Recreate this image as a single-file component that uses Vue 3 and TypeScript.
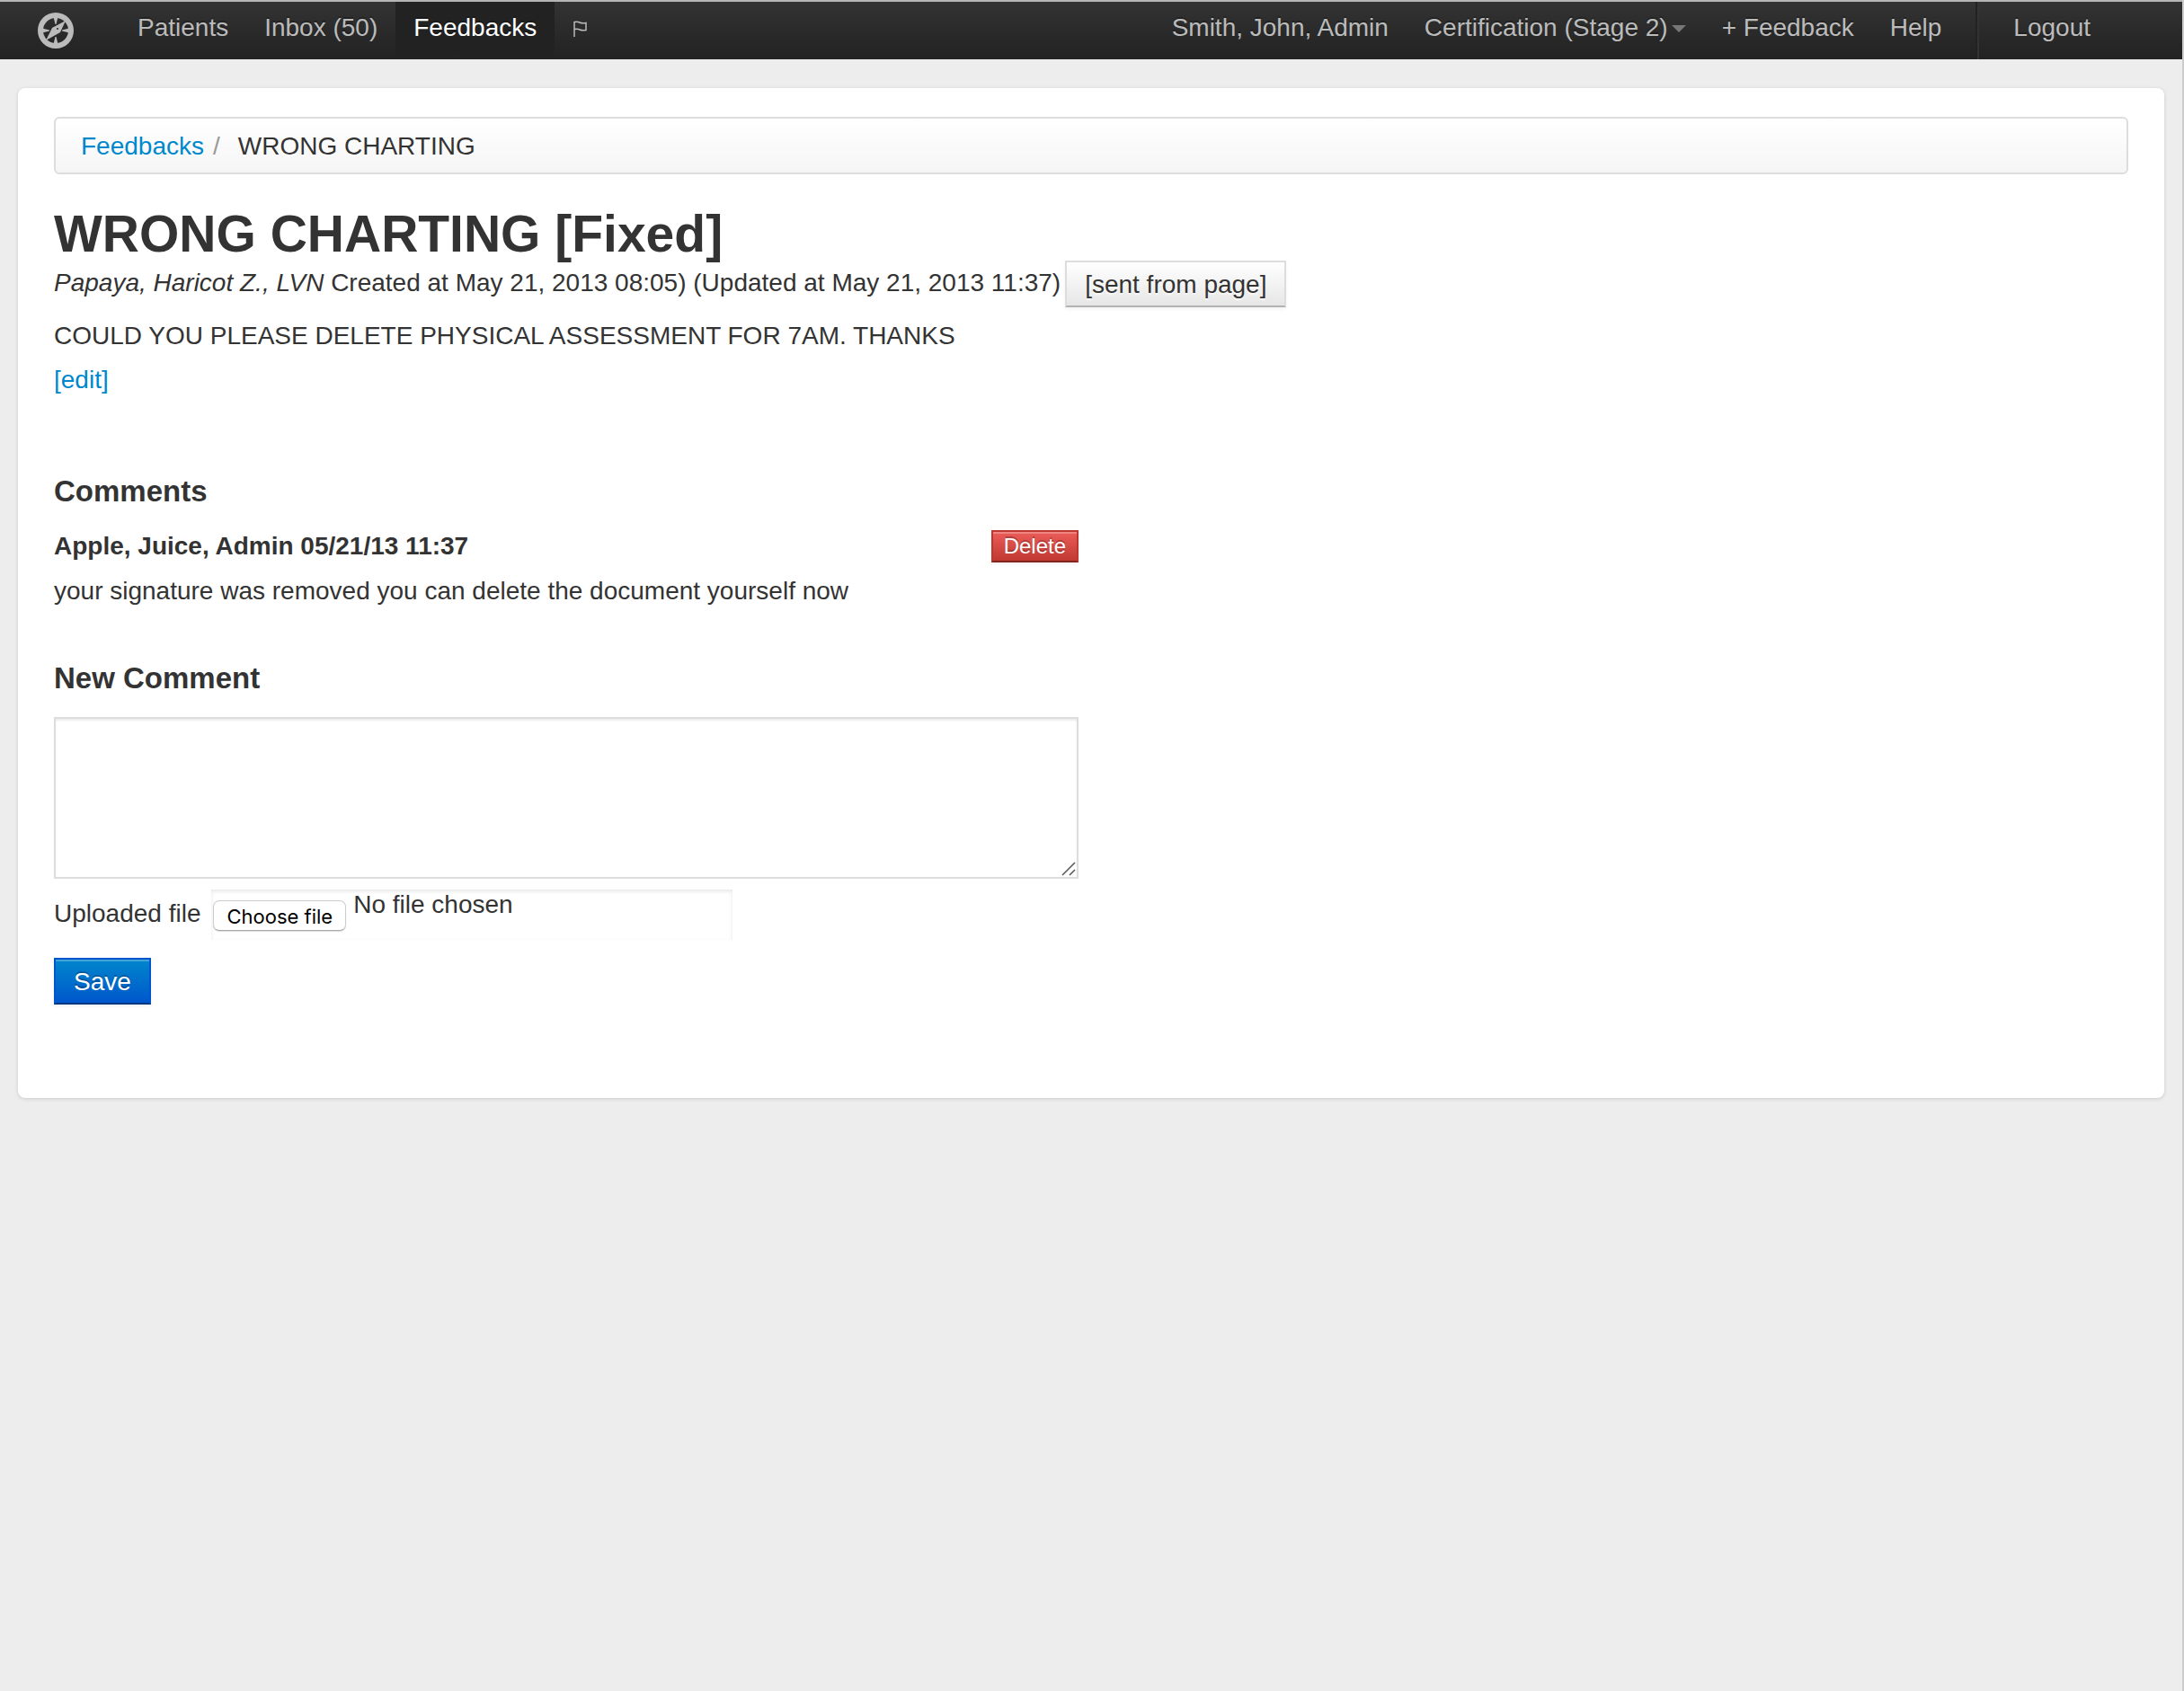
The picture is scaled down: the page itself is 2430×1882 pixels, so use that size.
<script setup lang="ts">
import { ref } from 'vue'

interface NavItem {
  label: string
  active?: boolean
  caret?: boolean
}

const mainNav: NavItem[] = [
  { label: 'Patients' },
  { label: 'Inbox (50)' },
  { label: 'Feedbacks', active: true },
]

const userNav: NavItem[] = [
  { label: 'Smith, John, Admin' },
  { label: 'Certification (Stage 2)', caret: true },
  { label: '+ Feedback' },
  { label: 'Help' },
]

const comment = ref('')
const fileName = ref('No file chosen')

function onFileChange(event: Event) {
  const input = event.target as HTMLInputElement
  fileName.value = input.files?.[0]?.name ?? 'No file chosen'
}
</script>

<template>
  <div class="page">
    <header class="navbar">
      <a href="#" class="brand" aria-label="Home">
        <svg viewBox="0 0 40 40" width="40" height="40" fill="#bbb">
          <path
            fill-rule="evenodd"
            d="M20 0a20 20 0 1 0 0 40a20 20 0 1 0 0-40zM20 6a14 14 0 1 1 0 28a14 14 0 1 1 0-28z"
          />
          <path d="M17.500 5h5L20.500 13h-1zM17.500 35h5L20.500 27h-1zM5 17.500v5L13 20.500v-1zM35 17.500v5L27 20.500v-1z" />
          <path d="M31 9L25 22L9 31L16 17z" />
          <circle cx="22" cy="18" r="1" fill="#292929" />
        </svg>
      </a>
      <nav class="nav">
        <a v-for="item in mainNav" :key="item.label" href="#" class="nav-link" :class="{ active: item.active }">{{ item.label }}</a>
        <a href="#" class="nav-link flag" aria-label="Flagged">
          <svg viewBox="0 0 16 18" width="16" height="18" fill="none" stroke="#bbb" stroke-width="1.500">
            <path d="M2 18V1M2 1.500C5 .800 6 1 8 2S12 3 15 2.500V10.500C12 11 10 11 8 10S5 9 2 9.500" />
          </svg>
        </a>
      </nav>
      <nav class="nav nav-right">
        <a v-for="item in userNav" :key="item.label" href="#" class="nav-link">{{ item.label }}<span v-if="item.caret" class="caret"></span></a>
        <span class="divider"></span>
        <a href="#" class="nav-link">Logout</a>
      </nav>
    </header>

    <main class="card">
      <nav class="breadcrumb">
        <a href="#">Feedbacks</a>
        <span class="separator">/</span>
        <span>WRONG CHARTING</span>
      </nav>

      <h1>WRONG CHARTING [Fixed]</h1>
      <div class="meta">
        <span class="meta-text"><em>Papaya, Haricot Z., LVN</em> Created at May 21, 2013 08:05) (Updated at May 21, 2013 11:37)</span>
        <button type="button" class="btn">[sent from page]</button>
      </div>
      <p class="message">COULD YOU PLEASE DELETE PHYSICAL ASSESSMENT FOR 7AM. THANKS</p>
      <a href="#" class="edit">[edit]</a>

      <section class="comments">
        <h2>Comments</h2>
        <article>
          <div class="comment-head">
            <strong>Apple, Juice, Admin 05/21/13 11:37</strong>
            <button type="button" class="btn btn-danger">Delete</button>
          </div>
          <p class="comment-body">your signature was removed you can delete the document yourself now</p>
        </article>
      </section>

      <form class="new-comment" @submit.prevent>
        <h2><label for="comment">New Comment</label></h2>
        <div class="textarea-wrap">
          <textarea id="comment" v-model="comment"></textarea>
          <svg class="grip" viewBox="0 0 16 16" width="16" height="16" stroke="#555" stroke-width="1.500">
            <path d="M1 15L15 1M9 15L15 9" />
          </svg>
        </div>
        <div class="upload">
          <label for="upload">Uploaded file</label>
          <div class="file-field">
            <span class="file-button">Choose file</span>
            <span class="file-name">{{ fileName }}</span>
            <input id="upload" type="file" @change="onFileChange" />
          </div>
        </div>
        <button type="submit" class="btn btn-primary">Save</button>
      </form>
    </main>
  </div>
</template>

<style>
body {
  margin: 0;
  background: #ededed;
}
</style>

<style scoped>
.page {
  box-sizing: border-box;
  min-height: 100vh;
  border-right: 2px solid #ccc;
  background: #ededed;
  color: #333;
  font-family: 'Liberation Sans', Arial, sans-serif;
  font-size: 28px;
  line-height: 36px;
}

a {
  color: #08c;
  text-decoration: none;
}

h1,
h2,
p {
  margin: 0;
}

.navbar {
  display: flex;
  height: 64px;
  padding: 0 82px 0 42px;
  border-top: 2px solid #b4b6b6;
  background: linear-gradient(#333, #222);
}

.brand {
  height: 40px;
  margin: 12px 51px 0 0;
  line-height: 0;
}

.nav {
  display: flex;
}

.nav-right {
  margin-left: auto;
}

.nav-link {
  display: flex;
  box-sizing: border-box;
  height: 60px;
  padding: 11px 20px;
  color: #bbb;
  text-shadow: 0 -2px 0 rgba(0, 0, 0, 0.25);
  white-space: nowrap;
}

.nav-link.active {
  background: #222;
  color: #fff;
}

.flag {
  align-items: center;
}

.caret {
  width: 0;
  height: 0;
  margin: 15px 0 0 4px;
  border: 8px solid transparent;
  border-top-color: #777;
  border-bottom: 0;
}

.divider {
  width: 2px;
  height: 64px;
  margin: 0 18px;
  border-left: 2px solid #222;
  background: #333;
}

.card {
  margin: 32px 20px 0;
  padding: 32px 40px 104px;
  border-radius: 8px;
  background: #fff;
  box-shadow: 0 1px 4px rgba(0, 0, 0, 0.15);
}

.breadcrumb {
  display: flex;
  padding: 13px 28px 11px;
  border: 2px solid #ddd;
  border-radius: 6px;
  background: linear-gradient(#fff, #f5f5f5);
  text-shadow: 0 2px 0 #fff;
}

.separator {
  padding: 0 20px 0 10px;
  color: #999;
}

h1 {
  margin-top: 36px;
  font-size: 57px;
  line-height: 60px;
}

h2 {
  font-size: 33px;
  line-height: 36px;
}

.meta {
  display: flex;
  flex-wrap: wrap;
  align-items: center;
  gap: 5px;
}

.meta-text {
  padding-bottom: 2px;
}

.message {
  margin: 14px 0 13px;
}

.edit {
  display: block;
  width: fit-content;
}

.comments,
.new-comment {
  width: 1140px;
  max-width: 100%;
}

.comments {
  margin-top: 88px;
}

.comment-head {
  display: flex;
  align-items: center;
  justify-content: space-between;
  margin-top: 25px;
}

.comment-body {
  margin-top: 14px;
}

.new-comment {
  margin-top: 61px;
}

.btn {
  padding: 7px 20px 5px;
  border: 2px solid #ddd;
  border-bottom-color: #b3b3b3;
  border-radius: 0;
  background: linear-gradient(#fff, #e6e6e6);
  box-shadow: inset 0 2px 0 rgba(255, 255, 255, 0.2), 0 2px 4px rgba(0, 0, 0, 0.05);
  color: #333;
  font: inherit;
  text-shadow: 0 2px 2px rgba(255, 255, 255, 0.75);
  cursor: pointer;
}

.btn-danger,
.btn-primary {
  color: #fff;
  text-shadow: 0 -2px 0 rgba(0, 0, 0, 0.25);
  box-shadow: inset 0 2px 0 rgba(255, 255, 255, 0.25), 0 2px 4px rgba(0, 0, 0, 0.05);
}

.btn-danger {
  padding: 0 12px;
  border-color: #bd362f;
  border-bottom-color: #802420;
  background: #d64842 linear-gradient(#ee5f5b, #bd362f) border-box;
  font-size: 24px;
  line-height: 32px;
}

.btn-primary {
  display: block;
  margin-top: 20px;
  border-color: #05c;
  border-bottom-color: #003580;
  background: #0074cc linear-gradient(#08c, #05c) border-box;
}

.textarea-wrap {
  position: relative;
  margin-top: 25px;
  line-height: 0;
}

textarea {
  box-sizing: border-box;
  width: 100%;
  height: 180px;
  margin: 0;
  padding: 8px;
  border: 2px solid #ddd;
  border-radius: 0;
  background: #fff;
  box-shadow: inset 0 2px 2px rgba(0, 0, 0, 0.08);
  color: #333;
  font: inherit;
  line-height: 36px;
  outline: none;
  resize: none;
}

.grip {
  position: absolute;
  right: 3px;
  bottom: 3px;
  fill: none;
}

.upload {
  display: flex;
  align-items: center;
  gap: 12px;
  margin-top: 12px;
}

.upload label {
  padding-bottom: 2px;
}

.file-field {
  position: relative;
  display: flex;
  align-items: flex-start;
  box-sizing: border-box;
  width: 580px;
  max-width: 100%;
  height: 56px;
  padding-left: 2px;
  box-shadow: inset 0 2px 4px rgba(0, 0, 0, 0.1);
}

.file-button {
  box-sizing: border-box;
  height: 34px;
  margin: 12px 8px 0 0;
  padding: 0 14px;
  border: 1px solid #ccc;
  border-bottom-color: #aaa;
  border-radius: 7px;
  background: #fff;
  box-shadow: 0 1px 1px rgba(0, 0, 0, 0.15);
  color: #000;
  font-family: Inter, sans-serif;
  font-size: 22px;
  line-height: 34px;
}

.file-name {
  margin-top: -1px;
}

.file-field input {
  position: absolute;
  inset: 0;
  width: 100%;
  opacity: 0;
  cursor: pointer;
}
</style>
